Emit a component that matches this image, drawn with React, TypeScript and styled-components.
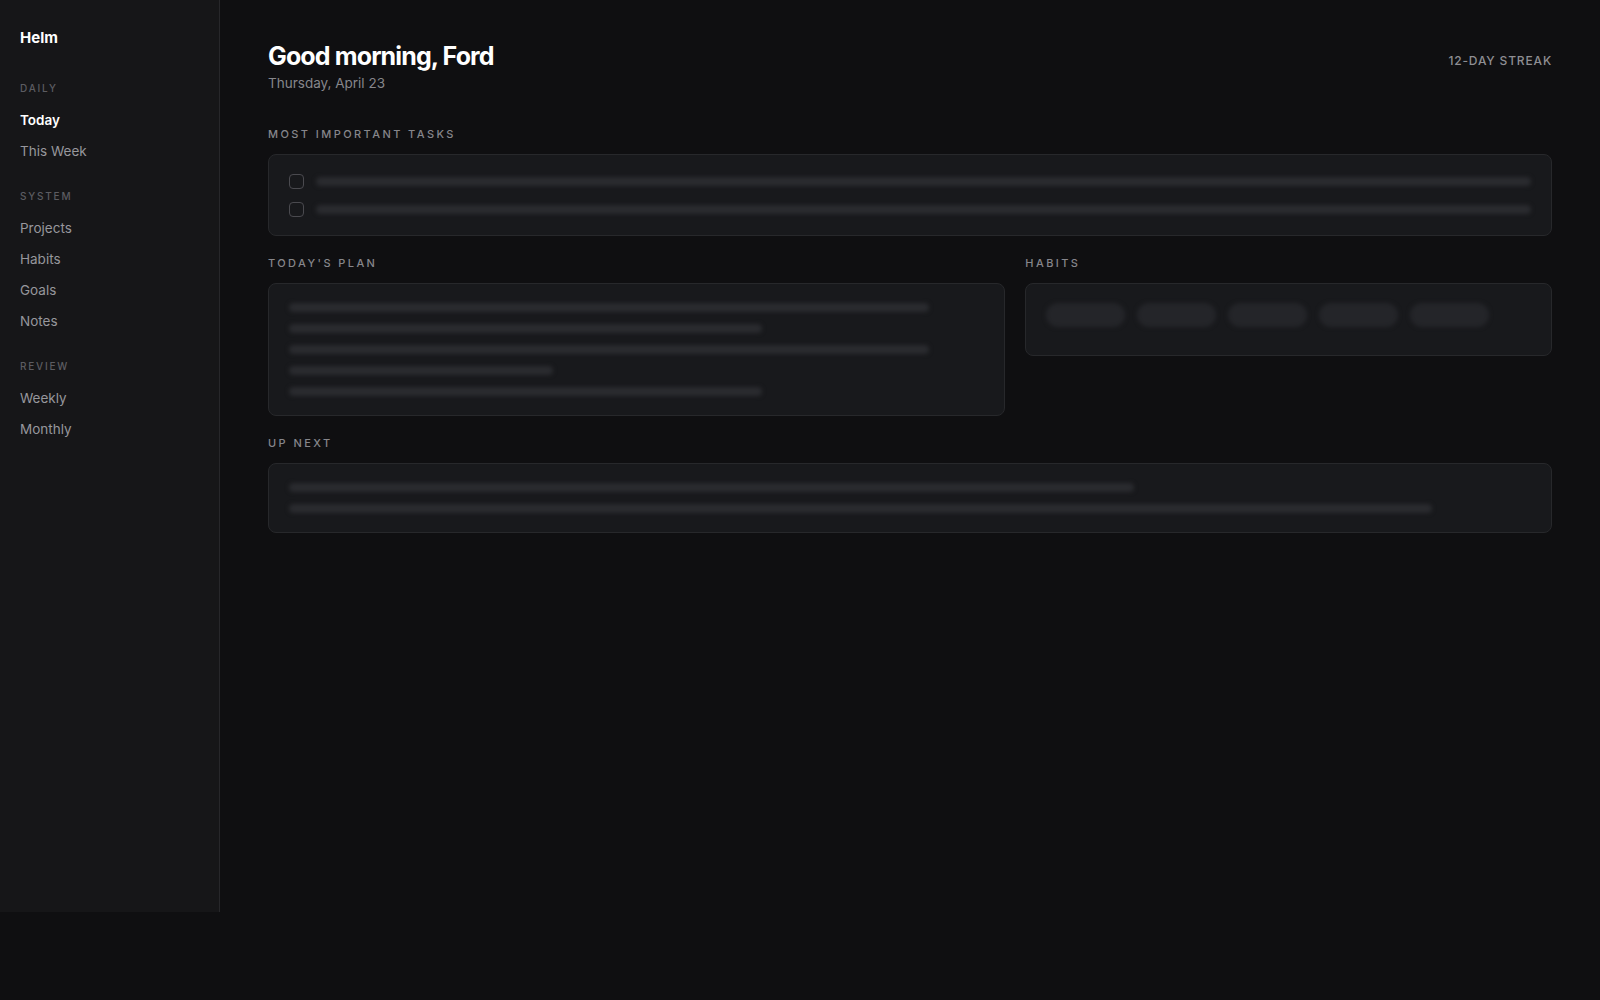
import { createGlobalStyle } from "styled-components";
import styled from "styled-components";

const GlobalStyle = createGlobalStyle`
  * {
    box-sizing: border-box;
  }
  html,
  body {
    margin: 0;
    padding: 0;
    background: #0f0f11;
    font-family: Inter, "Noto Sans", "Liberation Sans", sans-serif;
    -webkit-font-smoothing: antialiased;
  }
`;

const Shell = styled.div`
  display: flex;
  align-items: flex-start;
  width: 100%;
  min-height: 100vh;
  background: #0f0f11;
`;

// Sidebar
const Sidebar = styled.aside`
  flex: 0 0 220px;
  height: 912px;
  padding: 28px 20px;
  background: #161618;
  border-right: 1px solid #27272a;
`;

const Brand = styled.div`
  font-size: 15px;
  line-height: 20px;
  font-weight: 700;
  color: #ffffff;
  margin-bottom: 33px;
`;

const NavSection = styled.nav`
  display: flex;
  flex-direction: column;
  margin-bottom: 22px;
`;

const NavLabel = styled.div`
  font-size: 10px;
  line-height: 14px;
  font-weight: 500;
  letter-spacing: 0.18em;
  text-transform: uppercase;
  color: #5c5c61;
  margin-bottom: 10px;
`;

const NavItem = styled.a<{ $active?: boolean }>`
  display: block;
  padding: 6px 0;
  font-size: 13.5px;
  line-height: 19px;
  font-weight: ${(p) => (p.$active ? 600 : 400)};
  color: ${(p) => (p.$active ? "#ffffff" : "#97979c")};
  text-decoration: none;
  cursor: pointer;
`;

// Main area
const Main = styled.main`
  flex: 1;
  min-width: 0;
  padding: 41px 48px;
  display: flex;
  flex-direction: column;
  gap: 19px;
`;

const Header = styled.header`
  display: flex;
  justify-content: space-between;
  align-items: baseline;
  margin-bottom: 14px;
`;

const Greeting = styled.h1`
  margin: 0;
  font-size: 25px;
  line-height: 30px;
  font-weight: 700;
  letter-spacing: -0.035em;
  color: #ffffff;
`;

const DateLine = styled.div`
  margin-top: 2px;
  font-size: 13.5px;
  line-height: 20px;
  color: #86868b;
`;

const Streak = styled.div`
  font-size: 12px;
  font-weight: 500;
  letter-spacing: 0.07em;
  text-transform: uppercase;
  color: #8e8e93;
`;

const Section = styled.section`
  display: flex;
  flex-direction: column;
  min-width: 0;
`;

const SectionTitle = styled.h2`
  margin: 0 0 12px;
  font-size: 11px;
  line-height: 16px;
  font-weight: 500;
  letter-spacing: 0.22em;
  text-transform: uppercase;
  color: #86868b;
`;

const Card = styled.div<{ $pad?: string }>`
  background: #18191c;
  border: 1px solid #27282b;
  border-radius: 8px;
  padding: ${(p) => p.$pad ?? "19px 20px"};
`;

const Split = styled.div`
  display: grid;
  grid-template-columns: 7fr 5fr;
  gap: 20px;
  align-items: start;
`;

const Stack = styled.div<{ $gap: number }>`
  display: flex;
  flex-direction: column;
  gap: ${(p) => p.$gap}px;
`;

const TaskRow = styled.div`
  display: flex;
  align-items: center;
  gap: 12px;
  height: 16px;
`;

const Checkbox = styled.span`
  flex: 0 0 15px;
  width: 15px;
  height: 15px;
  border: 1.5px solid #4a4a4f;
  border-radius: 4px;
`;

// Loading placeholders
const SkeletonBar = styled.div`
  height: 9px;
  border-radius: 4.5px;
  background: #2a2b2f;
  filter: blur(2px);
`;

const PillRow = styled.div`
  display: flex;
  flex-wrap: wrap;
  gap: 12px;
`;

const SkeletonPill = styled.div`
  width: 79px;
  height: 24px;
  border-radius: 12px;
  background: #242529;
  filter: blur(2px);
`;

const planLines = [92, 68, 92, 38, 68];
const nextLines = [68, 92];

export default function App() {
  return (
    <>
      <GlobalStyle />
      <Shell>
        <Sidebar>
          <Brand>Helm</Brand>
          <NavSection>
            <NavLabel>Daily</NavLabel>
            <NavItem $active>Today</NavItem>
            <NavItem>This Week</NavItem>
          </NavSection>
          <NavSection>
            <NavLabel>System</NavLabel>
            <NavItem>Projects</NavItem>
            <NavItem>Habits</NavItem>
            <NavItem>Goals</NavItem>
            <NavItem>Notes</NavItem>
          </NavSection>
          <NavSection>
            <NavLabel>Review</NavLabel>
            <NavItem>Weekly</NavItem>
            <NavItem>Monthly</NavItem>
          </NavSection>
        </Sidebar>

        <Main>
          <Header>
            <div>
              <Greeting>Good morning, Ford</Greeting>
              <DateLine>Thursday, April 23</DateLine>
            </div>
            <Streak>12-day streak</Streak>
          </Header>

          <Section>
            <SectionTitle>Most important tasks</SectionTitle>
            <Card $pad="18px 20px">
              <Stack $gap={12}>
                {[0, 1].map((i) => (
                  <TaskRow key={i}>
                    <Checkbox />
                    <SkeletonBar style={{ flex: 1 }} />
                  </TaskRow>
                ))}
              </Stack>
            </Card>
          </Section>

          <Split>
            <Section>
              <SectionTitle>Today's plan</SectionTitle>
              <Card>
                <Stack $gap={12}>
                  {planLines.map((w, i) => (
                    <SkeletonBar key={i} style={{ width: `${w}%` }} />
                  ))}
                </Stack>
              </Card>
            </Section>
            <Section>
              <SectionTitle>Habits</SectionTitle>
              <Card $pad="19px 20px 28px">
                <PillRow>
                  {[0, 1, 2, 3, 4].map((i) => (
                    <SkeletonPill key={i} />
                  ))}
                </PillRow>
              </Card>
            </Section>
          </Split>

          <Section>
            <SectionTitle>Up next</SectionTitle>
            <Card>
              <Stack $gap={12}>
                {nextLines.map((w, i) => (
                  <SkeletonBar key={i} style={{ width: `${w}%` }} />
                ))}
              </Stack>
            </Card>
          </Section>
        </Main>
      </Shell>
    </>
  );
}
